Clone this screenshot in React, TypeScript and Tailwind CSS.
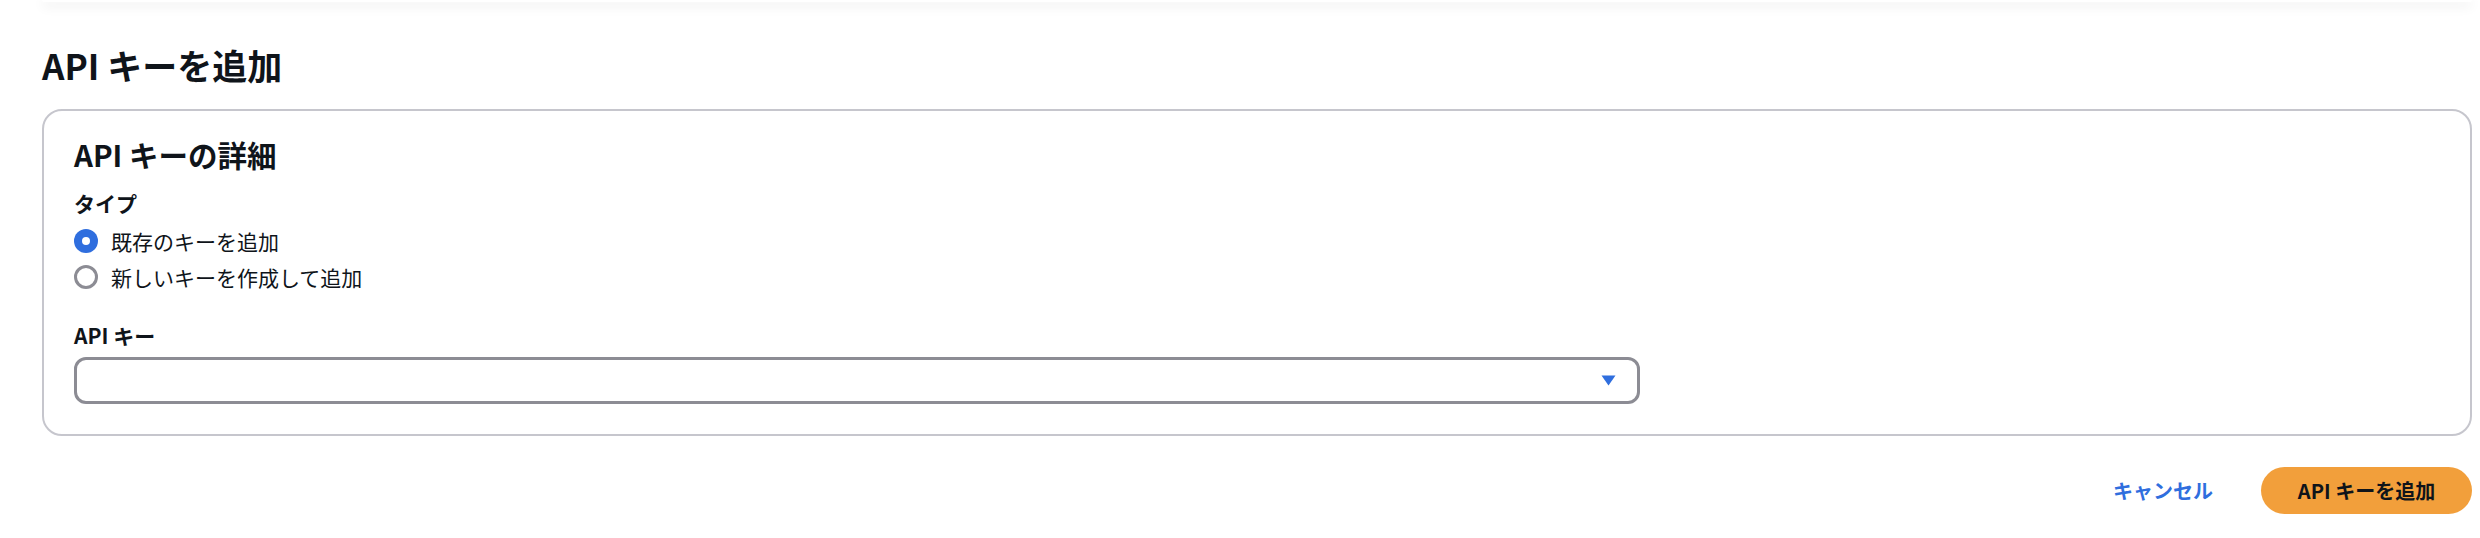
import React, { useState } from 'react';

const font = { fontFamily: '"Noto Sans CJK JP", "Noto Sans", sans-serif' };

type Option = { id: string; label: string };

const options: Option[] = [
  { id: 'existing', label: '既存のキーを追加' },
  { id: 'new', label: '新しいキーを作成して追加' },
];

const Radio: React.FC<{ checked: boolean; label: string; onSelect: () => void }> = ({ checked, label, onSelect }) => (
  <button onClick={onSelect} className="flex h-[36px] items-center gap-[13px] text-left">
    {checked ? (
      <span className="flex h-[24px] w-[24px] items-center justify-center rounded-full bg-[#2f6ede]">
        <span className="h-[8px] w-[8px] rounded-full bg-white" />
      </span>
    ) : (
      <span className="h-[24px] w-[24px] rounded-full border-[3px] border-[#8c8c94] bg-white" />
    )}
    <span className="text-[21px] leading-[28px] text-[#0f141a]">{label}</span>
  </button>
);

export default function App() {
  const [type, setType] = useState('existing');

  return (
    <div className="flex min-h-[538px] flex-col bg-white pl-[42px] pr-[8px] text-[#0f141a]" style={font}>
      {/* previous panel edge */}
      <div className="h-[2px] rounded-b-[4px] bg-white shadow-[0_3px_12px_rgba(0,0,0,0.2)]" />

      <h1 className="mt-[41px] text-[35px] font-bold leading-[44px]">API キーを追加</h1>

      {/* Details container */}
      <div className="mt-[22px] rounded-[20px] border-2 border-[#c6c6cd] px-[30px] pb-[30px] pt-[25px]">
        <h2 className="text-[29.5px] font-bold leading-[36px]">API キーの詳細</h2>

        <div className="mt-[17px] text-[21px] font-bold leading-[28px]">タイプ</div>
        <div className="mt-[6px] flex flex-col">
          {options.map((o) => (
            <Radio key={o.id} checked={type === o.id} label={o.label} onSelect={() => setType(o.id)} />
          ))}
        </div>

        <div className="mt-[26px] text-[21px] font-bold leading-[28px]">API キー</div>
        <button className="mt-[8px] flex h-[47px] w-[1566px] items-center justify-end rounded-[12px] border-[3px] border-[#8c8c94] bg-white pr-[21px]">
          <svg width="15" height="11" viewBox="0 0 15 11">
            <path d="M0.5 0.5 H14.5 L7.5 10.5 Z" fill="#2f6ede" />
          </svg>
        </button>
      </div>

      {/* Footer actions */}
      <div className="mt-[31px] flex items-center justify-end gap-[48px]">
        <button className="text-[20px] font-bold leading-[28px] text-[#2f6ede]">キャンセル</button>
        <button className="h-[47px] w-[211px] rounded-full bg-[#f29f3b] text-[20px] font-bold text-[#0f141a]">
          API キーを追加
        </button>
      </div>
    </div>
  );
}
